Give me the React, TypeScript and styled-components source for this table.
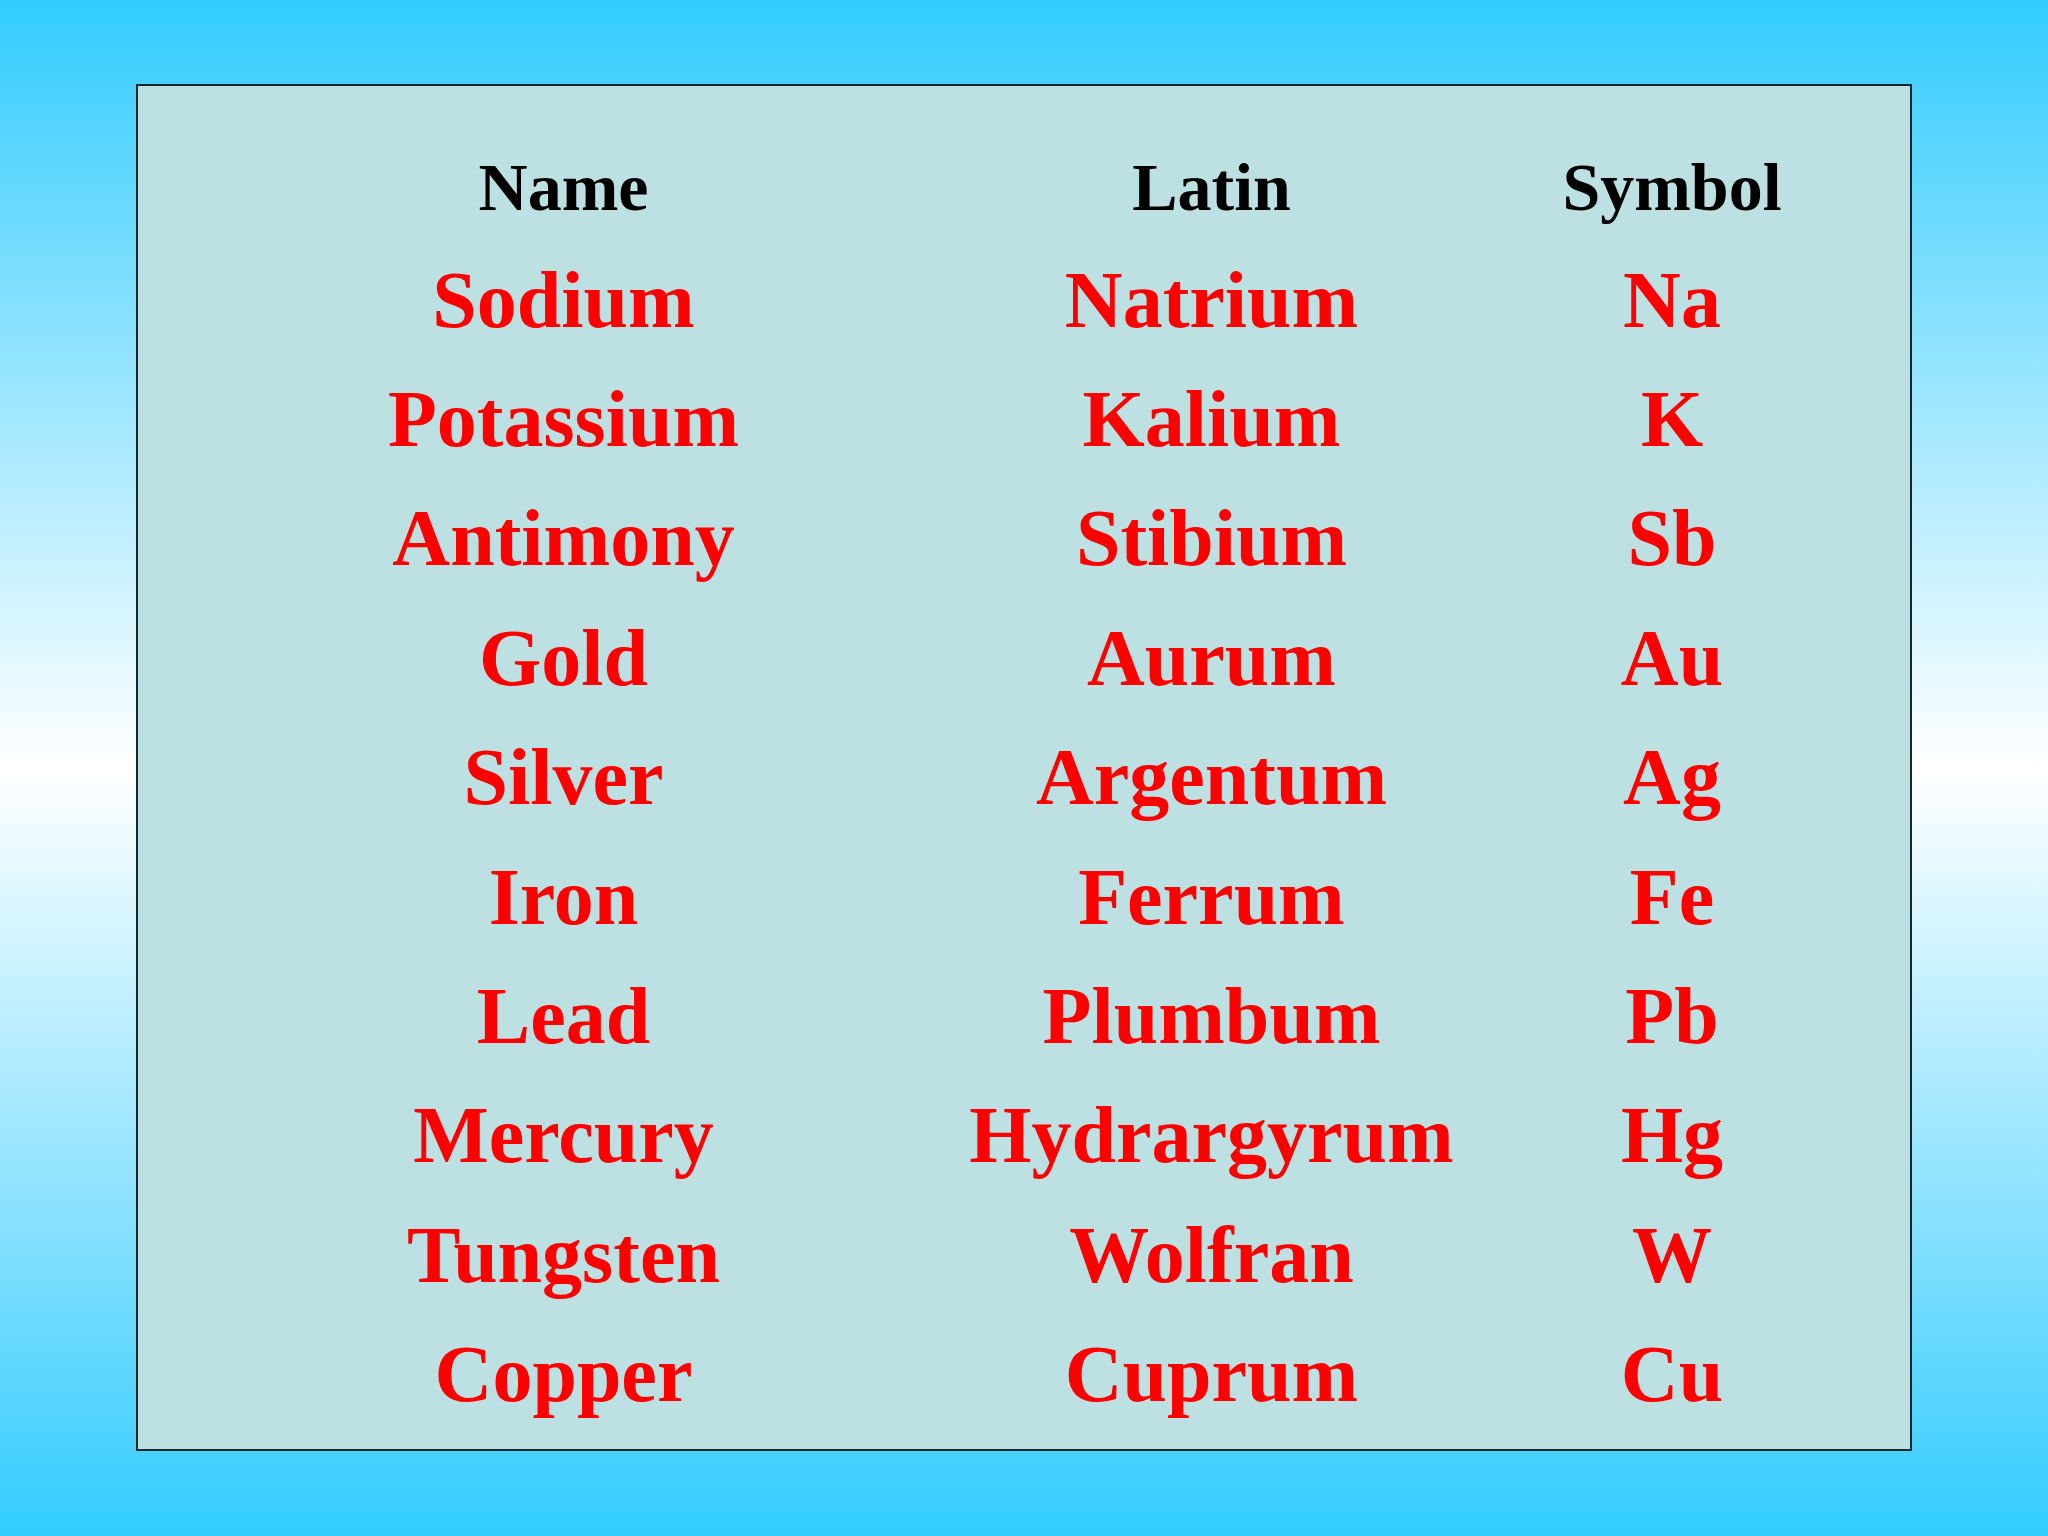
import styled, { createGlobalStyle } from "styled-components";

// 페이지 전체: 위아래 하늘색, 가운데 흰색 그라디언트
const GlobalStyle = createGlobalStyle`
    html, body {
        margin: 0;
        padding: 0;
    }
    body {
        width: 2048px;
        height: 1536px;
        overflow: hidden;
        background: linear-gradient(180deg, #33ccff 0%, #ffffff 50%, #33ccff 100%);
        font-family: "Liberation Serif", "Times New Roman", serif;
    }
`;

const Slide = styled.div`
    width: 2048px;
    height: 1536px;
    padding: 84px 0 0 136px;
    box-sizing: border-box;
`;

// 표를 담는 상자
const Board = styled.div`
    width: 1776px;
    height: 1367px;
    box-sizing: border-box;
    background: #bde0e3;
    border: 2px solid #16262d;
    padding-top: 48px;
`;

const Table = styled.div`
    display: grid;
    grid-template-columns: 851px 445px 476px;
`;

// 칸 하나: 넘쳐도 가운데 정렬 유지
const Cell = styled.div<{ $head?: boolean }>`
    display: flex;
    justify-content: center;
    white-space: nowrap;
    font-weight: 700;
    font-size: ${(p) => (p.$head ? "68px" : "80px")};
    line-height: ${(p) => (p.$head ? "106.5px" : "119.4px")};
    color: ${(p) => (p.$head ? "#000000" : "#ff0000")};
`;

const rows = [
    ["Sodium", "Natrium", "Na"],
    ["Potassium", "Kalium", "K"],
    ["Antimony", "Stibium", "Sb"],
    ["Gold", "Aurum", "Au"],
    ["Silver", "Argentum", "Ag"],
    ["Iron", "Ferrum", "Fe"],
    ["Lead", "Plumbum", "Pb"],
    ["Mercury", "Hydrargyrum", "Hg"],
    ["Tungsten", "Wolfran", "W"],
    ["Copper", "Cuprum", "Cu"],
];

export default function App() {
    return (
        <>
            <GlobalStyle />
            <Slide>
                <Board>
                    <Table>
                        <Cell $head>Name</Cell>
                        <Cell $head>Latin</Cell>
                        <Cell $head>Symbol</Cell>
                        {rows.map((r) =>
                            r.map((t, i) => <Cell key={r[0] + i}>{t}</Cell>)
                        )}
                    </Table>
                </Board>
            </Slide>
        </>
    );
}
